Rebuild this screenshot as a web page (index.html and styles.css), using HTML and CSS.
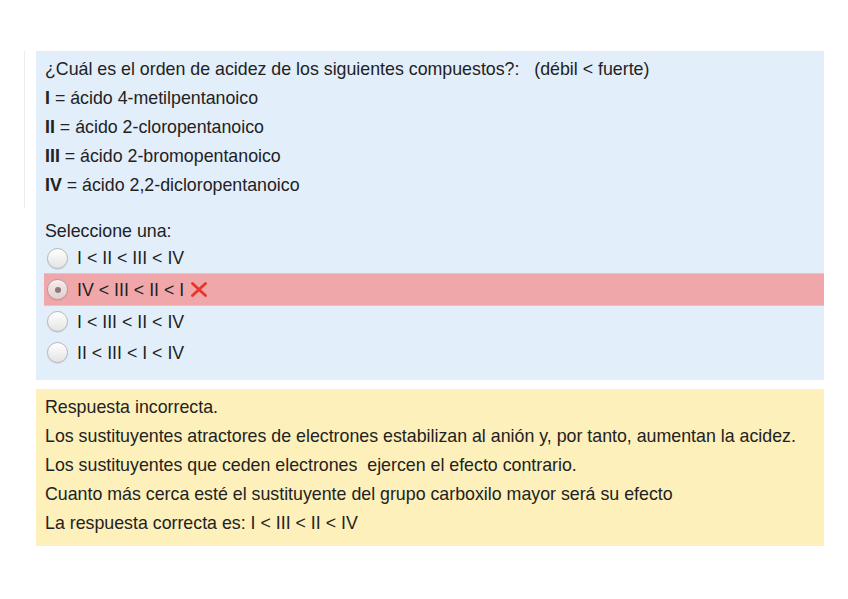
FILE: index.html
```html
<!DOCTYPE html>
<html lang="es">
<head>
<meta charset="utf-8">
<link rel="stylesheet" href="styles.css">
</head>
<body>
<div class="page">
  <div class="rule"></div>
  <div class="content">
    <div class="formulation">
      <div class="qtext">
        <p class="line">¿Cuál es el orden de acidez de los siguientes compuestos?:&nbsp;&nbsp; (débil &lt; fuerte)</p>
        <p class="line"><b>I</b> = ácido 4-metilpentanoico</p>
        <p class="line"><b>II</b> = ácido 2-cloropentanoico</p>
        <p class="line"><b>III</b> = ácido 2-bromopentanoico</p>
        <p class="line"><b>IV</b> = ácido 2,2-dicloropentanoico</p>
      </div>
      <div class="ablock">
        <div class="prompt">Seleccione una:</div>
        <div class="answer">
          <div class="opt"><span class="radio"></span><span class="label">I &lt; II &lt; III &lt; IV</span></div>
          <div class="opt incorrect"><span class="radio checked"><span class="dot"></span></span><span class="label">IV &lt; III &lt; II &lt; I</span>
            <svg class="xicon" width="18" height="15" viewBox="0 0 18 15"><path d="M2.5 1.5 L15.5 13.5 M15.5 1.5 L2.5 13.5" stroke="#e5362b" stroke-width="2.8" stroke-linecap="round" fill="none"/></svg>
          </div>
          <div class="opt"><span class="radio"></span><span class="label">I &lt; III &lt; II &lt; IV</span></div>
          <div class="opt"><span class="radio"></span><span class="label">II &lt; III &lt; I &lt; IV</span></div>
        </div>
      </div>
    </div>
    <div class="outcome">
      <p class="line">Respuesta incorrecta.</p>
      <p class="line">Los sustituyentes atractores de electrones estabilizan al anión y, por tanto, aumentan la acidez.</p>
      <p class="line">Los sustituyentes que ceden electrones&nbsp; ejercen el efecto contrario.</p>
      <p class="line">Cuanto más cerca esté el sustituyente del grupo carboxilo mayor será su efecto</p>
      <p class="line">La respuesta correcta es: I &lt; III &lt; II &lt; IV</p>
    </div>
  </div>
</div>
</body>
</html>
```
FILE: styles.css
```css
html, body {
  margin: 0;
  padding: 0;
  background: #ffffff;
}
body {
  font-family: "Liberation Sans", Arial, sans-serif;
  font-size: 17.8px;
  color: #222222;
}
.page {
  display: flex;
  align-items: flex-start;
  padding: 51px 24px 0 24px;
}
.rule {
  width: 1px;
  height: 157px;
  background: #ececec;
  margin-right: 11px;
  flex: none;
}
.content {
  flex: 1;
  display: flex;
  flex-direction: column;
  gap: 9px;
}
.formulation {
  background: #e2eef9;
  padding: 4px 0 12px 9px;
}
.line {
  margin: 0;
  line-height: 29px;
  white-space: nowrap;
}
.line b {
  font-weight: bold;
}
.ablock {
  margin-top: 19px;
}
.prompt {
  line-height: 24px;
}
.answer {
  display: flex;
  flex-direction: column;
}
.opt {
  display: flex;
  align-items: center;
  height: 31px;
  margin-left: -1px;
  padding-left: 3px;
}
.opt:first-child {
  height: 30px;
}
.opt.incorrect {
  background: #f0a7a9;
  border-top: 1px solid #f2bcc1;
  border-bottom: 1px solid #f2bcc1;
}
.radio {
  width: 21px;
  height: 21px;
  border-radius: 50%;
  box-sizing: border-box;
  border: 1px solid #b5b5b5;
  background: linear-gradient(#ffffff, #e4e4e4);
  box-shadow: inset 0 1px 1px rgba(255,255,255,0.8), 0 1px 1px rgba(0,0,0,0.08);
  margin-right: 9px;
  display: flex;
  align-items: center;
  justify-content: center;
  flex: none;
}
.radio.checked {
  background: linear-gradient(#f7eaea, #e2cfd0);
  border-color: #b89a9c;
}
.dot {
  width: 6px;
  height: 6px;
  border-radius: 50%;
  background: #8a7a7c;
}
.label {
  line-height: 20px;
}
.xicon {
  margin-left: 6px;
  flex: none;
}
.outcome {
  background: #fdf0bb;
  padding: 4px 0 8px 9px;
}
```
